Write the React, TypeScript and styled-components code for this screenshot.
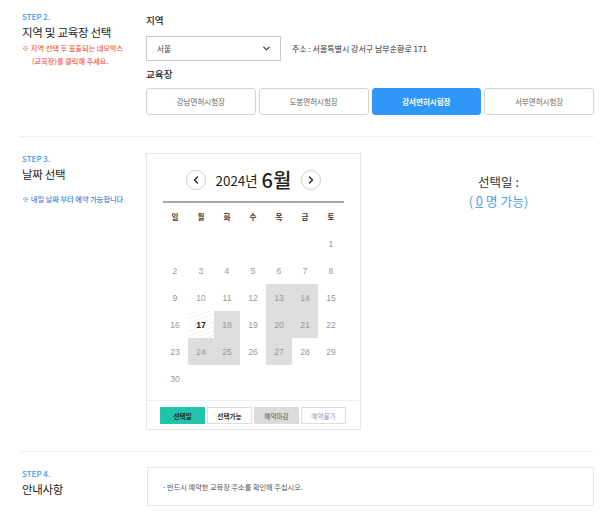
import React from 'react'
import styled, { createGlobalStyle, css } from 'styled-components'
import { ChevronDown, ChevronLeft, ChevronRight } from 'lucide-react'

const FONT = "'Noto Sans CJK KR', 'Noto Sans', 'Liberation Sans', sans-serif"

const GlobalStyle = createGlobalStyle`
  * { box-sizing: border-box; }
  body {
    margin: 0;
    background: #fff;
    font-family: ${FONT};
    color: #222;
  }
`

const centers = ['강남면허시험장', '도봉면허시험장', '강서면허시험장', '서부면허시험장']
const weekdays = ['일', '월', '화', '수', '목', '금', '토']
const closed = [13, 14, 18, 20, 21, 24, 25, 27]
const today = 17

type DayKind = 'empty' | 'normal' | 'closed' | 'today'

const buildDays = () => {
  const cells: { day?: number; kind: DayKind }[] = []
  for (let i = 0; i < 6; i++) cells.push({ kind: 'empty' })
  for (let d = 1; d <= 30; d++) {
    const kind: DayKind = d === today ? 'today' : closed.includes(d) ? 'closed' : 'normal'
    cells.push({ day: d, kind })
  }
  return cells
}

const App = () => {
  const days = buildDays()

  return (
    <>
      <GlobalStyle />
      <StyledPage>
        <StyledSection top={0} bottom={21}>
          <StyledSide top={11}>
            <StyledStep>STEP 2.</StyledStep>
            <StyledTitle>지역 및 교육장 선택</StyledTitle>
            <StyledWarn>
              ※ 지역 선택 후 표출되는 네모박스
              <br />
              (교육장)를 클릭해 주세요.
            </StyledWarn>
          </StyledSide>
          <StyledMain top={12}>
            <StyledLabel>지역</StyledLabel>
            <StyledRegionRow>
              <StyledSelect>
                <span>서울</span>
                <ChevronDown size={11} strokeWidth={2.6} color='#333' />
              </StyledSelect>
              <StyledAddress>주소 : 서울특별시 강서구 남부순환로 171</StyledAddress>
            </StyledRegionRow>
            <StyledLabel gap>교육장</StyledLabel>
            <StyledCenterGrid>
              {centers.map((name) => (
                <StyledCenterBtn key={name} active={name === '강서면허시험장'}>
                  {name}
                </StyledCenterBtn>
              ))}
            </StyledCenterGrid>
          </StyledMain>
        </StyledSection>

        <StyledSection top={16} bottom={21}>
          <StyledSide top={0}>
            <StyledStep>STEP 3.</StyledStep>
            <StyledTitle>날짜 선택</StyledTitle>
            <StyledNote>※ 내일 날짜 부터 예약 가능합니다</StyledNote>
          </StyledSide>
          <StyledDateRow>
            <StyledCalendar>
              <StyledCalHead>
                <StyledArrow>
                  <ChevronLeft size={12} strokeWidth={3.2} color='#333' />
                </StyledArrow>
                <StyledYear>2024년</StyledYear>
                <StyledMonth>6월</StyledMonth>
                <StyledArrow>
                  <ChevronRight size={12} strokeWidth={3.2} color='#333' />
                </StyledArrow>
              </StyledCalHead>
              <StyledWeekRow>
                {weekdays.map((w) => (
                  <StyledWeekday key={w}>{w}</StyledWeekday>
                ))}
              </StyledWeekRow>
              <StyledDayGrid>
                {days.map((c, i) => (
                  <StyledDay key={i} kind={c.kind}>
                    {c.day}
                  </StyledDay>
                ))}
              </StyledDayGrid>
              <StyledLegend>
                <StyledLegendItem kind='selected'>선택일</StyledLegendItem>
                <StyledLegendItem kind='available'>선택가능</StyledLegendItem>
                <StyledLegendItem kind='closed'>예약마감</StyledLegendItem>
                <StyledLegendItem kind='disabled'>예약불가</StyledLegendItem>
              </StyledLegend>
            </StyledCalendar>
            <StyledPicked>
              <StyledPickedTitle>선택일 :</StyledPickedTitle>
              <StyledPickedCount>
                ( <u>0</u> 명 가능)
              </StyledPickedCount>
            </StyledPicked>
          </StyledDateRow>
        </StyledSection>

        <StyledSection top={15} bottom={20} last>
          <StyledSide top={1}>
            <StyledStep>STEP 4.</StyledStep>
            <StyledTitle>안내사항</StyledTitle>
          </StyledSide>
          <StyledInfoBox>- 반드시 예약한 교육장 주소를 확인해 주십시오.</StyledInfoBox>
        </StyledSection>
      </StyledPage>
    </>
  )
}

export default App

const StyledPage = styled.div`
  width: 616px;
  padding: 0 22px 0 20px;
`

const StyledSection = styled.section<{ top: number; bottom: number; last?: boolean }>`
  display: grid;
  grid-template-columns: 126px 1fr;
  padding: ${({ top }) => top}px 0 ${({ bottom }) => bottom}px;
  border-bottom: ${({ last }) => (last ? 'none' : '1px solid #efefef')};
`

const StyledSide = styled.div<{ top: number }>`
  padding: ${({ top }) => top}px 0 0 2px;
`

const StyledStep = styled.div`
  font-size: 8px;
  line-height: 12px;
  font-weight: 500;
  color: #3d9af0;
`

const StyledTitle = styled.div`
  font-size: 11.5px;
  line-height: 18px;
  letter-spacing: -0.3px;
  color: #222;
`

const StyledWarn = styled.div`
  margin-top: 1px;
  padding-left: 10px;
  text-indent: -10px;
  font-size: 7.2px;
  line-height: 13px;
  font-weight: 500;
  color: #f2584a;
`

const StyledNote = styled.div`
  margin-top: 10px;
  font-size: 7.2px;
  line-height: 12px;
  font-weight: 500;
  color: #3f82d8;
`

const StyledMain = styled.div<{ top: number }>`
  padding-top: ${({ top }) => top}px;
`

const StyledLabel = styled.div<{ gap?: boolean }>`
  margin: ${({ gap }) => (gap ? '5px 0 6px' : '0 0 8px')};
  font-size: 9.6px;
  line-height: 16px;
  font-weight: 500;
  color: #222;
`

const StyledRegionRow = styled.div`
  display: flex;
  align-items: center;
  gap: 11px;
`

const StyledSelect = styled.div`
  display: flex;
  align-items: center;
  justify-content: space-between;
  width: 135px;
  height: 25px;
  padding: 0 8px 0 10px;
  border: 1px solid #c8c8c8;
  font-size: 7.5px;
  color: #444;
`

const StyledAddress = styled.span`
  font-size: 8px;
  color: #333;
`

const StyledCenterGrid = styled.div`
  display: grid;
  grid-template-columns: repeat(4, 1fr);
  gap: 3px;
`

const StyledCenterBtn = styled.button<{ active?: boolean }>`
  height: 27px;
  padding: 0;
  border-radius: 3px;
  font-family: ${FONT};
  font-size: 7.5px;
  cursor: pointer;

  ${({ active }) =>
    active
      ? css`
          background: #2f97f7;
          border: 1px solid #2f97f7;
          color: #fff;
          font-weight: 700;
        `
      : css`
          background: #fff;
          border: 1px solid #d4d4d4;
          color: #666;
        `}
`

const StyledDateRow = styled.div`
  display: flex;
  align-items: flex-start;
`

const StyledCalendar = styled.div`
  width: 215px;
  border: 1px solid #e6e6e6;
`

const StyledCalHead = styled.div`
  display: flex;
  align-items: center;
  justify-content: center;
  gap: 8px;
  margin: 0 16px 0 16px;
  padding: 16px 0 11px;
  border-bottom: 2px solid #aaa;
`

const StyledArrow = styled.span`
  display: flex;
  align-items: center;
  justify-content: center;
  width: 20px;
  height: 20px;
  border: 1px solid #cfcfcf;
  border-radius: 50%;
  margin: 0 2px;
`

const StyledYear = styled.span`
  font-size: 13.4px;
  line-height: 20px;
  color: #222;
`

const StyledMonth = styled.span`
  margin-left: -4px;
  font-size: 20px;
  line-height: 20px;
  font-weight: 500;
  color: #222;
`

const StyledWeekRow = styled.div`
  display: grid;
  grid-template-columns: repeat(7, 26px);
  height: 27px;
  margin-left: 15px;
  padding-top: 8px;
`

const StyledWeekday = styled.span`
  text-align: center;
  font-size: 7.5px;
  font-weight: 700;
  color: #333;
`

const StyledDayGrid = styled.div`
  display: grid;
  grid-template-columns: repeat(7, 26px);
  grid-auto-rows: 27px;
  margin: 0 0 8px 15px;
`

const StyledDay = styled.span<{ kind: DayKind }>`
  display: flex;
  align-items: center;
  justify-content: center;
  font-family: 'Liberation Sans', sans-serif;
  font-size: 8.6px;
  color: #999;

  ${({ kind }) =>
    kind === 'closed' &&
    css`
      background: #dedede;
    `}

  ${({ kind }) =>
    kind === 'today' &&
    css`
      font-weight: 700;
      color: #222;
      background: repeating-linear-gradient(160deg, #fff 0 3px, #f3f3f3 3px 4px);
    `}
`

const legendStyles = {
  selected: css`
    background: repeating-linear-gradient(135deg, #22c7ae 0 2px, #1bb89f 2px 3px);
    border-color: #22c7ae;
    color: #222;
    font-weight: 700;
  `,
  available: css`
    background: #fff;
    color: #333;
    font-weight: 700;
  `,
  closed: css`
    background: #dcdcdc;
    border-color: #dcdcdc;
    color: #555;
  `,
  disabled: css`
    background: #fff;
    color: #999;
  `
}

const StyledLegend = styled.div`
  display: grid;
  grid-template-columns: repeat(4, 45px);
  gap: 2px;
  padding: 6px 0 5px 13px;
  border-top: 1px solid #efefef;
`

const StyledLegendItem = styled.span<{ kind: keyof typeof legendStyles }>`
  display: flex;
  align-items: center;
  justify-content: center;
  height: 17px;
  border: 1px solid #ddd;
  font-size: 6.6px;

  ${({ kind }) => legendStyles[kind]}
`

const StyledPicked = styled.div`
  flex: 1;
  padding: 19px 0 0 42px;
  text-align: center;
`

const StyledPickedTitle = styled.div`
  font-size: 12.5px;
  line-height: 20px;
  color: #333;
`

const StyledPickedCount = styled.div`
  font-size: 12.8px;
  line-height: 18px;
  color: #4d9ff0;
`

const StyledInfoBox = styled.div`
  display: flex;
  align-items: center;
  height: 39px;
  margin-left: 1px;
  padding-left: 15px;
  border: 1px solid #e6e6e6;
  font-size: 7.2px;
  color: #555;
`
